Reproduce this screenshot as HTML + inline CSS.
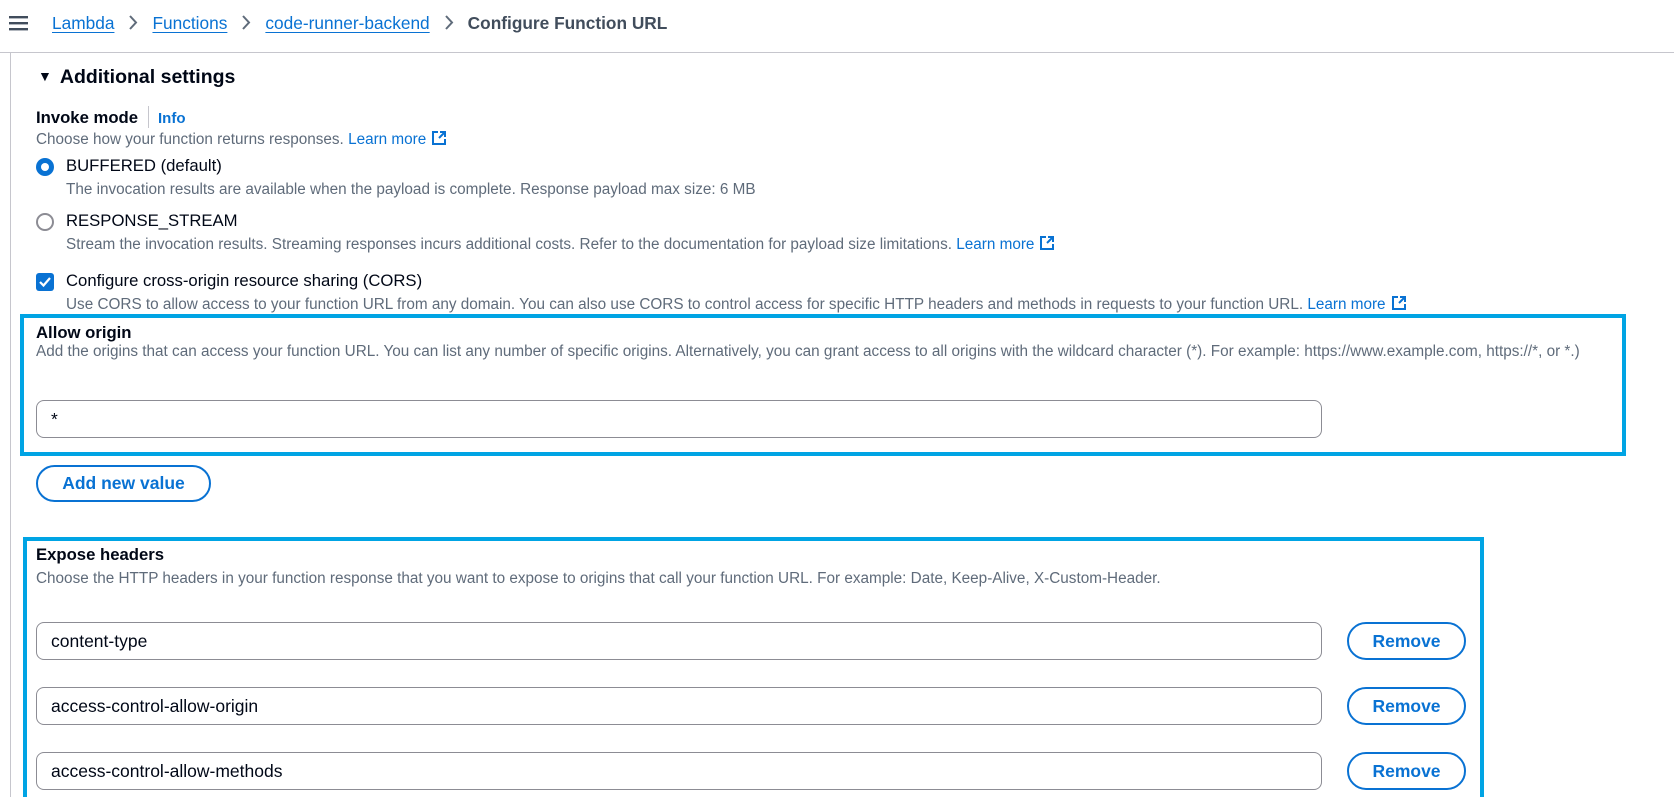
<!DOCTYPE html>
<html><head><meta charset="utf-8"><style>
*{box-sizing:border-box;margin:0;padding:0}
html,body{width:1674px;height:797px;overflow:hidden}
body{background:#fff;font-family:"Liberation Sans",Arial,sans-serif;color:#000716;position:relative}
.a{position:absolute;white-space:nowrap}
.bc a{color:#0972d3;text-decoration:underline;text-underline-offset:3px}
.d{font-size:15.3px;color:#5f6b7a}
.l{color:#0972d3}
.lbl{font-size:16.7px;font-weight:bold}
.inp{position:absolute;left:36px;width:1286px;height:38px;border:1px solid #8c8c94;border-radius:8px;font-size:17.5px;padding:0 14px;line-height:36px}
.btn{position:absolute;border:2px solid #0972d3;border-radius:20px;color:#0972d3;font-weight:bold;font-size:17.5px;text-align:center}
.box{position:absolute;border:4px solid #00a4e4}
.ext{display:inline-block;vertical-align:-2px;margin-left:5px}
.chev{display:inline-block;margin:0 14px;vertical-align:-2px}
</style></head><body>
<svg class="a" style="left:9px;top:15px" width="19" height="16" viewBox="0 0 19 16"><rect y="1" width="19" height="2.4" fill="#414d5c"/><rect y="7" width="19" height="2.4" fill="#414d5c"/><rect y="13" width="19" height="2.4" fill="#414d5c"/></svg>
<div class="a bc" style="left:52px;top:13px;font-size:17.3px;line-height:20px">
<a>Lambda</a><svg class="chev" width="10" height="17" viewBox="0 0 10 17"><path d="M2 2l6 6.5L2 15" fill="none" stroke="#5f6b7a" stroke-width="2"/></svg><a>Functions</a><svg class="chev" width="10" height="17" viewBox="0 0 10 17"><path d="M2 2l6 6.5L2 15" fill="none" stroke="#5f6b7a" stroke-width="2"/></svg><a>code-runner-backend</a><svg class="chev" width="10" height="17" viewBox="0 0 10 17"><path d="M2 2l6 6.5L2 15" fill="none" stroke="#5f6b7a" stroke-width="2"/></svg><b style="color:#414d5c">Configure Function URL</b></div>
<div class="a" style="left:0;top:52px;width:1674px;height:1px;background:#c6c6cd"></div>
<div class="a" style="left:10px;top:52px;width:1px;height:745px;background:#c6c6cd"></div>

<div class="a" style="left:38px;top:64px;font-size:19.5px;font-weight:bold;line-height:24px"><span style="font-size:14px;margin-right:8px;vertical-align:2px">&#9660;</span>Additional settings</div>

<div class="a lbl" style="left:36px;top:106px;line-height:20px">Invoke mode<span style="display:inline-block;width:1px;height:22px;background:#c6c6cd;margin:0 9px 0 10px;vertical-align:-5px"></span><span class="l" style="font-size:15px">Info</span></div>
<div class="a d" style="left:36px;top:130px">Choose how your function returns responses. <span class="l">Learn more</span><svg class="ext" width="16" height="16" viewBox="0 0 16 16"><path d="M7 2H2v12h12V9M9 2h5v5M14 2L8 8" fill="none" stroke="#0972d3" stroke-width="2"/></svg></div>

<div class="a" style="left:36px;top:158px;width:18px;height:18px;border-radius:50%;background:#0972d3"><div style="position:absolute;left:5px;top:5px;width:8px;height:8px;border-radius:50%;background:#fff"></div></div>
<div class="a" style="left:66px;top:156px;font-size:16.7px">BUFFERED (default)</div>
<div class="a d" style="left:66px;top:181px">The invocation results are available when the payload is complete. Response payload max size: 6 MB</div>

<div class="a" style="left:36px;top:213px;width:18px;height:18px;border-radius:50%;border:2px solid #8c8c94"></div>
<div class="a" style="left:66px;top:211px;font-size:16.7px">RESPONSE_STREAM</div>
<div class="a d" style="left:66px;top:235px">Stream the invocation results. Streaming responses incurs additional costs. Refer to the documentation for payload size limitations. <span class="l">Learn more</span><svg class="ext" width="16" height="16" viewBox="0 0 16 16"><path d="M7 2H2v12h12V9M9 2h5v5M14 2L8 8" fill="none" stroke="#0972d3" stroke-width="2"/></svg></div>

<div class="a" style="left:36px;top:273px;width:18px;height:18px;border-radius:3px;background:#0972d3"><svg width="18" height="18" viewBox="0 0 18 18"><path d="M4 9l3.5 3.5L14 5" fill="none" stroke="#fff" stroke-width="2.2"/></svg></div>
<div class="a" style="left:66px;top:271px;font-size:16.7px">Configure cross-origin resource sharing (CORS)</div>
<div class="a d" style="left:66px;top:295px">Use CORS to allow access to your function URL from any domain. You can also use CORS to control access for specific HTTP headers and methods in requests to your function URL. <span class="l">Learn more</span><svg class="ext" width="16" height="16" viewBox="0 0 16 16"><path d="M7 2H2v12h12V9M9 2h5v5M14 2L8 8" fill="none" stroke="#0972d3" stroke-width="2"/></svg></div>

<div class="box" style="left:20px;top:314px;width:1606px;height:142px"></div>
<div class="a lbl" style="left:36px;top:323px">Allow origin</div>
<div class="a d" style="left:36px;top:343px">Add the origins that can access your function URL. You can list any number of specific origins. Alternatively, you can grant access to all origins with the wildcard character (*). For example: https://www.example.com, https://*, or *.)</div>
<div class="inp" style="top:400px">*</div>
<div class="btn" style="left:36px;top:465px;width:175px;height:37px;line-height:33px">Add new value</div>

<div class="box" style="left:23px;top:537px;width:1461px;height:265px"></div>
<div class="a lbl" style="left:36px;top:545px">Expose headers</div>
<div class="a d" style="left:36px;top:570px">Choose the HTTP headers in your function response that you want to expose to origins that call your function URL. For example: Date, Keep-Alive, X-Custom-Header.</div>
<div class="inp" style="top:622px">content-type</div>
<div class="btn" style="left:1347px;top:622px;width:119px;height:38px;line-height:34px">Remove</div>
<div class="inp" style="top:687px">access-control-allow-origin</div>
<div class="btn" style="left:1347px;top:687px;width:119px;height:38px;line-height:34px">Remove</div>
<div class="inp" style="top:752px">access-control-allow-methods</div>
<div class="btn" style="left:1347px;top:752px;width:119px;height:38px;line-height:34px">Remove</div>
</body></html>
